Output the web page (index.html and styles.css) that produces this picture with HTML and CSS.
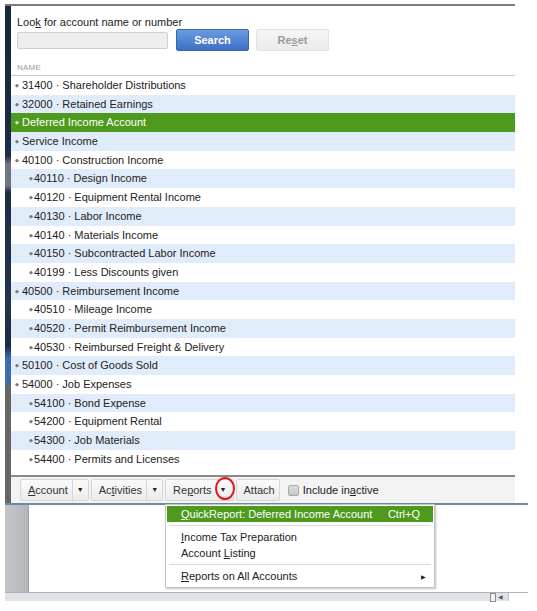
FILE: index.html
```html
<!DOCTYPE html>
<html lang="en">
<head>
    <meta charset="UTF-8">
    <title>Chart of Accounts</title>
    <link rel="stylesheet" href="styles.css">
</head>
<body>
    <div class="screen">
        <div class="frame">
            <div class="strip"></div>
            <div class="panel">
                <div class="search">
                    <label for="q">Loo<u>k</u> for account name or number</label>
                    <div class="search-row">
                        <input type="text" id="q">
                        <button class="btn-search">Search</button>
                        <button class="btn-reset">Re<u>s</u>et</button>
                    </div>
                    <div class="col-head">NAME</div>
                </div>
                <div class="list">
                    <div class="row"><span class="dot">&#9670;</span>31400 &middot; Shareholder Distributions</div>
                    <div class="row alt"><span class="dot">&#9670;</span>32000 &middot; Retained Earnings</div>
                    <div class="row sel"><span class="dot">&#9670;</span>Deferred Income Account</div>
                    <div class="row alt"><span class="dot">&#9670;</span>Service Income</div>
                    <div class="row"><span class="dot">&#9670;</span>40100 &middot; Construction Income</div>
                    <div class="row alt sub"><span class="dot">&#9670;</span>40110 &middot; Design Income</div>
                    <div class="row sub"><span class="dot">&#9670;</span>40120 &middot; Equipment Rental Income</div>
                    <div class="row alt sub"><span class="dot">&#9670;</span>40130 &middot; Labor Income</div>
                    <div class="row sub"><span class="dot">&#9670;</span>40140 &middot; Materials Income</div>
                    <div class="row alt sub"><span class="dot">&#9670;</span>40150 &middot; Subcontracted Labor Income</div>
                    <div class="row sub"><span class="dot">&#9670;</span>40199 &middot; Less Discounts given</div>
                    <div class="row alt"><span class="dot">&#9670;</span>40500 &middot; Reimbursement Income</div>
                    <div class="row sub"><span class="dot">&#9670;</span>40510 &middot; Mileage Income</div>
                    <div class="row alt sub"><span class="dot">&#9670;</span>40520 &middot; Permit Reimbursement Income</div>
                    <div class="row sub"><span class="dot">&#9670;</span>40530 &middot; Reimbursed Freight &amp; Delivery</div>
                    <div class="row alt"><span class="dot">&#9670;</span>50100 &middot; Cost of Goods Sold</div>
                    <div class="row"><span class="dot">&#9670;</span>54000 &middot; Job Expenses</div>
                    <div class="row alt sub"><span class="dot">&#9670;</span>54100 &middot; Bond Expense</div>
                    <div class="row sub"><span class="dot">&#9670;</span>54200 &middot; Equipment Rental</div>
                    <div class="row alt sub"><span class="dot">&#9670;</span>54300 &middot; Job Materials</div>
                    <div class="row sub"><span class="dot">&#9670;</span>54400 &middot; Permits and Licenses</div>
                </div>
                <div class="toolbar">
                    <div class="tb-btn split"><span class="tb-label"><u>A</u>ccount</span><span class="tb-arrow">&#9660;</span></div>
                    <div class="tb-btn split"><span class="tb-label">Ac<u>t</u>ivities</span><span class="tb-arrow">&#9660;</span></div>
                    <div class="tb-btn split reports"><span class="tb-label">Re<u>p</u>orts</span><span class="tb-arrow">&#9660;</span><span class="ring"></span></div>
                    <div class="tb-btn"><span class="tb-label">Attach</span></div>
                    <label class="inactive"><span class="box"></span>Include in<u>a</u>ctive</label>
                </div>
            </div>
        </div>

        <div class="lower">
            <div class="lower-body">
                <div class="gutter"></div>
                <div class="sheet"></div>
            </div>
            <div class="status">
                <span class="grip"></span>
                <span class="tri">&#9664;</span>
                <span class="field"></span>
            </div>
        </div>

        <div class="menu">
            <div class="menu-item hot"><span><u>Q</u>uickReport: Deferred Income Account</span><span class="key">Ctrl+Q</span></div>
            <div class="menu-sep"></div>
            <div class="menu-item"><span><u>I</u>ncome Tax Preparation</span></div>
            <div class="menu-item"><span>Account <u>L</u>isting</span></div>
            <div class="menu-sep"></div>
            <div class="menu-item"><span><u>R</u>eports on All Accounts</span><span class="sub-arrow">&#9654;</span></div>
        </div>
    </div>
</body>
</html>
```

FILE: styles.css
```css
body {
    margin: 0;
    background: #fff;
    font-family: "Liberation Sans", Arial, sans-serif;
    font-size: 11px;
    color: #222;
}
.screen {
    position: relative;
    width: 537px;
    height: 611px;
    padding-top: 4px;
    box-sizing: border-box;
}
.frame {
    display: flex;
    margin-left: 5px;
    width: 510px;
    border-top: 2px solid #7a7a7a;
}
.strip {
    width: 6px;
    flex: none;
    background: linear-gradient(to bottom,
        #16263c 0, #1c2d46 150px, #6f7680 158px, #6f7680 180px, #1c2d46 186px,
        #22344e 300px, #1a2b42 340px, #3c6bb4 352px, #3c6bb4 377px, #666 380px, #666 100%);
}
.panel {
    flex: 1;
    background: #fff;
}

/* search box */
.search {
    padding: 10px 0 0 6px;
    height: 59px;
    border-bottom: 1px solid #c8c8c8;
}
.search label {
    display: block;
    line-height: 13px;
    color: #222;
}
.search-row {
    display: flex;
    align-items: center;
}
.search-row input {
    width: 149px;
    height: 15px;
    border: 1px solid #cfcfcf;
    border-radius: 2px;
    background: #eeeeee;
    padding: 0;
    margin: 0 8px 0 0;
}
.search-row button {
    width: 73px;
    height: 22px;
    border-radius: 2px;
    font-family: inherit;
    font-size: 11px;
    font-weight: bold;
    cursor: pointer;
}
.btn-search {
    background: linear-gradient(#6a9be0, #3d6fc6);
    border: 1px solid #3a66b0;
    color: #fff;
    margin-right: 7px;
}
.btn-reset {
    background: linear-gradient(#f6f6f6, #ebebeb);
    border: 1px solid #e2e2e2;
    color: #9a9a9a;
}
.col-head {
    margin-top: 12px;
    font-size: 8px;
    color: #9a9a9a;
    letter-spacing: 0.2px;
}

/* account list */
.list {
    height: 399px;
    border-bottom: 2px solid #8a8a8a;
}
.row {
    height: 18.7px;
    line-height: 18px;
    padding-left: 4px;
    white-space: nowrap;
    color: #222;
}
.row.alt {
    background: #e1ecfb;
}
.row.sel {
    background: #4e9a1c;
    color: #fff;
}
.row.sub {
    padding-left: 18px;
}
.dot {
    display: inline-block;
    font-size: 5px;
    vertical-align: 2px;
    color: #777;
    margin-right: 3px;
}
.row.sub .dot {
    margin-right: 1px;
}
.row.sel .dot {
    color: #d8ecc8;
}

/* bottom button bar */
.toolbar {
    display: flex;
    align-items: center;
    height: 26px;
    padding-left: 9px;
    background: #f3f3f3;
}
.tb-btn {
    position: relative;
    display: flex;
    align-items: center;
    height: 20px;
    border: 1px solid #d6d6d6;
    border-radius: 2px;
    background: linear-gradient(#fafafa, #ebebeb);
    color: #333;
    margin-right: 2px;
}
.tb-label {
    padding: 0 4px 0 7px;
}
.tb-arrow {
    font-size: 7px;
    color: #222;
    border-left: 1px solid #d6d6d6;
    height: 20px;
    line-height: 20px;
    padding: 0 4px;
}
.reports .tb-label {
    padding-right: 6px;
}
.reports .tb-arrow {
    border-left: none;
    padding: 0 6px 0 2px;
}
.ring {
    position: absolute;
    right: -2px;
    top: -3px;
    width: 16px;
    height: 19px;
    border: 2px solid #e21a1a;
    border-radius: 50%;
}
.inactive {
    display: flex;
    align-items: center;
    margin-left: 6px;
    color: #222;
}
.box {
    width: 9px;
    height: 9px;
    border: 1px solid #aaa;
    border-radius: 2px;
    background: linear-gradient(#ddd, #c8c8c8);
    margin-right: 4px;
}

/* lower window area */
.lower {
    margin-left: 5px;
    width: 523px;
}
.lower-body {
    display: flex;
    height: 87px;
    border-top: 2px solid #6c8aa0;
    border-bottom: 1px solid #b0b4b8;
}
.gutter {
    width: 23px;
    background: linear-gradient(to right, #c3c7cc, #b3b7bc);
    border-right: 1px solid #9ca0a4;
}
.sheet {
    flex: 1;
    background: #fff;
}
.status {
    position: relative;
    height: 8px;
    background: #dfe3e8;
}
.grip {
    position: absolute;
    left: 485px;
    top: 0;
    width: 4px;
    height: 7px;
    border: 1px solid #8a8a8a;
    background: #f4f4f4;
}
.tri {
    position: absolute;
    left: 493px;
    top: 0;
    font-size: 6px;
    line-height: 8px;
    color: #555;
}
.field {
    position: absolute;
    left: 503px;
    top: 0;
    width: 20px;
    height: 8px;
    background: #fff;
    border-left: 1px solid #c0c4c8;
}

/* reports drop-down */
.menu {
    position: absolute;
    left: 165px;
    top: 504px;
    width: 266px;
    padding: 1px 1px 3px;
    background: #fff;
    border: 1px solid #c4c4c4;
    box-shadow: 1px 1px 2px rgba(0, 0, 0, 0.25);
}
.menu-item {
    display: flex;
    justify-content: space-between;
    align-items: center;
    height: 16px;
    padding: 0 7px 0 14px;
    color: #222;
}
.menu-item.hot {
    background: #4e9a1c;
    color: #fff;
    margin-bottom: 2px;
}
.key {
    margin-right: 6px;
}
.sub-arrow {
    font-size: 6px;
    color: #222;
}
.menu-sep {
    height: 1px;
    background: #dcdcdc;
    margin: 3px 2px 3px 2px;
}
```
